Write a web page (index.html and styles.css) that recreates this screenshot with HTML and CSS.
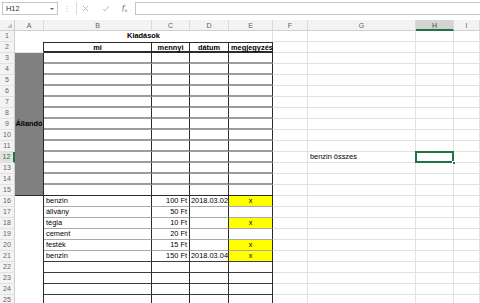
FILE: index.html
```html
<!DOCTYPE html>
<html lang="hu">
<head>
    <meta charset="UTF-8">
    <meta name="viewport" content="width=device-width, initial-scale=1.0">
    <title>Kiadások</title>
    <link rel="stylesheet" href="styles.css">
</head>
<body>
    <div class="formula-bar">
        <div class="name-box">H12<span class="caret"></span></div>
        <div class="grip">⋮</div>
        <div class="fx-buttons">
            <svg class="btn-cancel" width="7" height="7" viewBox="0 0 7 7"><path d="M1 1L6 6M6 1L1 6" stroke="#b4b4b4" stroke-width="0.9" fill="none"/></svg>
            <svg class="btn-ok" width="8" height="7" viewBox="0 0 8 7"><path d="M1 4L3 6L7 1" stroke="#b4b4b4" stroke-width="0.9" fill="none"/></svg>
            <span class="fx">f<sub>x</sub></span>
        </div>
        <div class="formula-input"></div>
    </div>

    <div class="sheet" id="sheet"></div>

    <script>
        const sheet = document.getElementById('sheet');
        const letters = ['A', 'B', 'C', 'D', 'E', 'F', 'G', 'H', 'I'];
        const heads = ['mi', 'mennyi', 'dátum', 'megjegyzés'];
        const items = {
            16: ['benzin', '100 Ft', '2018.03.02', 'x'],
            17: ['állvány', '50 Ft', '', ''],
            18: ['tégla', '10 Ft', '', 'x'],
            19: ['cement', '20 Ft', '', ''],
            20: ['festék', '15 Ft', '', 'x'],
            21: ['benzin', '150 Ft', '2018.03.04', 'x']
        };

        function addCell(className, text) {
            const el = document.createElement('div');
            el.className = className;
            el.textContent = text || '';
            sheet.appendChild(el);
            return el;
        }

        // column headers
        addCell('corner');
        letters.forEach(l => addCell(l === 'H' ? 'ch on' : 'ch', l));

        for (let r = 1; r <= 25; r++) {
            addCell(r === 12 ? 'rh on' : 'rh', r);

            if (r === 1) {
                addCell('cell title', 'Kiadások');
            } else {
                if (r === 2) addCell('cell a2');
                if (r === 3) addCell('cell fixed', 'Állandó');
                if (r === 16) addCell('cell rest');

                for (let c = 0; c < 4; c++) {
                    let cls = 'cell t';
                    let text = '';
                    if (r === 2) {
                        cls += ' th';
                        text = heads[c];
                    } else if (r <= 14) {
                        cls += ' mid';
                    } else if (r === 15) {
                        cls += ' end';
                    } else if (r <= 20) {
                        cls += ' item';
                    } else {
                        cls += ' low';
                    }
                    if (items[r]) {
                        text = items[r][c];
                        if (c === 1) cls += ' num';
                        if (c === 2) cls += ' date';
                        if (c === 3) cls += text ? ' note mark' : ' note';
                    }
                    addCell(cls, text);
                }
            }

            addCell('cell');
            addCell('cell', r === 12 ? 'benzin összes' : '');
            addCell(r === 12 ? 'cell sel' : 'cell');
            addCell('cell');
        }
    </script>
</body>
</html>
```

FILE: styles.css
```css
body {
    margin: 0;
    background-color: #fff;
    font-family: "Liberation Sans", Arial, sans-serif;
    font-size: 7.4px;
    color: #000;
    overflow: hidden;
    height: 303px;
}
.formula-bar {
    display: flex;
    height: 20px;
    padding: 2px 0 0 2px;
    box-sizing: border-box;
}
.name-box {
    width: 56px;
    height: 13px;
    box-sizing: border-box;
    border: 1px solid #c6c6c6;
    padding: 0 3px;
    line-height: 11px;
    color: #333;
    display: flex;
    justify-content: space-between;
    align-items: center;
}
.caret {
    width: 0;
    height: 0;
    border-left: 2px solid transparent;
    border-right: 2px solid transparent;
    border-top: 2px solid #666;
}
.grip {
    width: 18px;
    text-align: center;
    color: #bdbdbd;
    line-height: 13px;
    font-size: 8px;
}
.fx-buttons {
    width: 59px;
    height: 13px;
    box-sizing: border-box;
    border-left: 1px solid #dadada;
    display: flex;
    align-items: center;
}
.btn-cancel {
    margin-left: 5px;
}
.btn-ok {
    margin-left: 13px;
}
.fx {
    margin-left: 12px;
    font-family: "DejaVu Serif", serif;
    font-style: italic;
    font-size: 7px;
    color: #555;
}
.fx sub {
    font-size: 5px;
}
.formula-input {
    flex: 1;
    height: 13px;
    box-sizing: border-box;
    border: 1px solid #c6c6c6;
    border-right: none;
}
.sheet {
    display: grid;
    grid-template-columns: 15px 29px 108px 38px 39px 44px 35px 108px 38px 1fr;
    grid-auto-rows: 11px;
}
.sheet > div {
    box-sizing: border-box;
    white-space: nowrap;
}
.corner {
    background-color: #f3f3f3;
    border-right: 1px solid #cfcfcf;
    border-bottom: 1px solid #cfcfcf;
    position: relative;
}
.corner::after {
    content: '';
    position: absolute;
    right: 2px;
    bottom: 2px;
    border-left: 5px solid transparent;
    border-bottom: 5px solid #c3c3c3;
}
.ch {
    background-color: #f3f3f3;
    color: #5f5f5f;
    font-size: 7px;
    text-align: center;
    line-height: 11px;
    border-right: 1px solid #dadada;
    border-bottom: 1px solid #cfcfcf;
}
.ch.on {
    background-color: #d4d4d4;
    color: #444;
    border-bottom: 2px solid #217346;
}
.rh {
    background-color: #f3f3f3;
    color: #666;
    font-size: 7px;
    text-align: center;
    line-height: 10px;
    border-right: 1px solid #cfcfcf;
    border-bottom: 1px solid #e2e2e2;
}
.rh.on {
    background-color: #e1e1e1;
    color: #217346;
    border-right: 2px solid #217346;
}
.cell {
    border-right: 1px solid #e1e1e1;
    border-bottom: 1px solid #e1e1e1;
    padding: 0 2px;
    line-height: 10px;
}
.title {
    grid-column: span 5;
    font-weight: bold;
    text-align: center;
    border-bottom: none;
}
.a2 {
    border-right-color: #2b2b2b;
}
.fixed {
    grid-row: span 13;
    background-color: #808080;
    border-right: 1px solid #2b2b2b;
    border-bottom: 1px solid #2b2b2b;
    font-weight: bold;
    display: flex;
    align-items: center;
    justify-content: center;
    padding: 0;
}
.rest {
    grid-row: span 10;
    border-right-color: #2b2b2b;
    border-bottom: none;
}
.t {
    border-right-color: #2b2b2b;
}
.th {
    font-weight: bold;
    text-align: center;
    line-height: 9px;
    padding-top: 1px;
    border-bottom: 2px solid #2b2b2b;
    box-shadow: inset 0 1px 0 #2b2b2b;
}
.mid {
    border-bottom: 2px solid #9c9c9c;
}
.end {
    border-bottom-color: #2b2b2b;
}
.item {
    border-bottom-color: #a8a8a8;
}
.low {
    border-bottom-color: #3c3c3c;
}
.num {
    text-align: right;
}
.date {
    padding: 0 1px;
}
.note {
    text-align: center;
}
.mark {
    background-color: #ffff00;
}
.sel {
    position: relative;
    z-index: 1;
}
.sel::before {
    content: '';
    position: absolute;
    left: -1px;
    top: -1px;
    right: -1px;
    bottom: -1px;
    border: 2px solid #217346;
}
.sel::after {
    content: '';
    position: absolute;
    right: -3px;
    bottom: -3px;
    width: 4px;
    height: 4px;
    background-color: #217346;
    border: 1px solid #fff;
    box-sizing: border-box;
}
```
